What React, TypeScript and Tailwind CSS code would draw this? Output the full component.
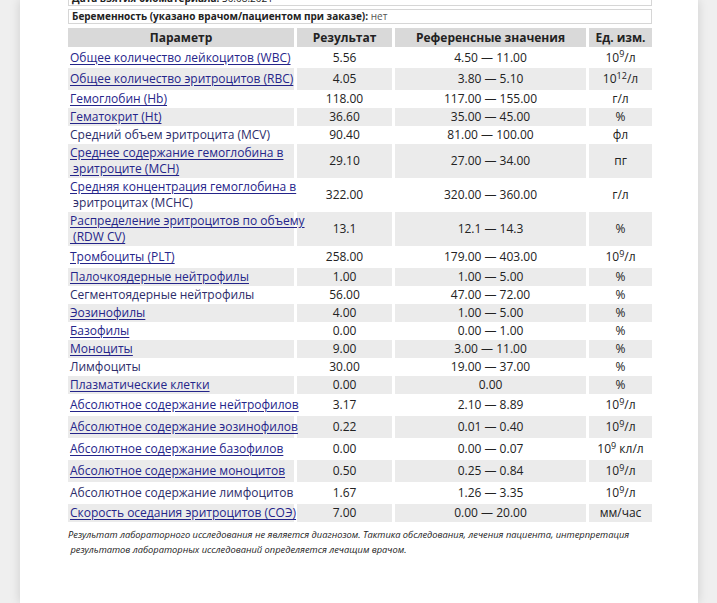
type Row = {
  name: string[];
  link?: boolean;
  plainSecond?: boolean;
  result: string;
  ref: string;
  unit: React.ReactNode;
  h: string;
};

const tenNine = (
  <>
    10<sup className="text-[9px]">9</sup>/л
  </>
);

const rows: Row[] = [
  { name: ["Общее количество лейкоцитов (WBC)"], link: true, result: "5.56", ref: "4.50 — 11.00", unit: tenNine, h: "h-[21px]" },
  { name: ["Общее количество эритроцитов (RBC)"], link: true, result: "4.05", ref: "3.80 — 5.10", unit: <>10<sup className="text-[9px]">12</sup>/л</>, h: "h-[22px]" },
  { name: ["Гемоглобин (Hb)"], link: true, result: "118.00", ref: "117.00 — 155.00", unit: "г/л", h: "h-[18px]" },
  { name: ["Гематокрит (Ht)"], link: true, result: "36.60", ref: "35.00 — 45.00", unit: "%", h: "h-[18px]" },
  { name: ["Средний объем эритроцита (MCV)"], result: "90.40", ref: "81.00 — 100.00", unit: "фл", h: "h-[18px]" },
  { name: ["Среднее содержание гемоглобина в", " эритроците (MCH)"], link: true, result: "29.10", ref: "27.00 — 34.00", unit: "пг", h: "h-[34px]" },
  { name: ["Средняя концентрация гемоглобина в", " эритроцитах (MCHC)"], link: true, plainSecond: true, result: "322.00", ref: "320.00 — 360.00", unit: "г/л", h: "h-[34px]" },
  { name: ["Распределение эритроцитов по объему", " (RDW CV)"], link: true, result: "13.1", ref: "12.1 — 14.3", unit: "%", h: "h-[34px]" },
  { name: ["Тромбоциты (PLT)"], link: true, result: "258.00", ref: "179.00 — 403.00", unit: tenNine, h: "h-[22px]" },
  { name: ["Палочкоядерные нейтрофилы"], link: true, result: "1.00", ref: "1.00 — 5.00", unit: "%", h: "h-[18px]" },
  { name: ["Сегментоядерные нейтрофилы"], result: "56.00", ref: "47.00 — 72.00", unit: "%", h: "h-[18px]" },
  { name: ["Эозинофилы"], link: true, result: "4.00", ref: "1.00 — 5.00", unit: "%", h: "h-[18px]" },
  { name: ["Базофилы"], link: true, result: "0.00", ref: "0.00 — 1.00", unit: "%", h: "h-[18px]" },
  { name: ["Моноциты"], link: true, result: "9.00", ref: "3.00 — 11.00", unit: "%", h: "h-[18px]" },
  { name: ["Лимфоциты"], result: "30.00", ref: "19.00 — 37.00", unit: "%", h: "h-[18px]" },
  { name: ["Плазматические клетки"], link: true, result: "0.00", ref: "0.00", unit: "%", h: "h-[18px]" },
  { name: ["Абсолютное содержание нейтрофилов"], link: true, result: "3.17", ref: "2.10 — 8.89", unit: tenNine, h: "h-[22px]" },
  { name: ["Абсолютное содержание эозинофилов"], link: true, result: "0.22", ref: "0.01 — 0.40", unit: tenNine, h: "h-[22px]" },
  { name: ["Абсолютное содержание базофилов"], link: true, result: "0.00", ref: "0.00 — 0.07", unit: <>10<sup className="text-[9px]">9</sup> кл/л</>, h: "h-[22px]" },
  { name: ["Абсолютное содержание моноцитов"], link: true, result: "0.50", ref: "0.25 — 0.84", unit: tenNine, h: "h-[22px]" },
  { name: ["Абсолютное содержание лимфоцитов"], result: "1.67", ref: "1.26 — 3.35", unit: tenNine, h: "h-[22px]" },
  { name: ["Скорость оседания эритроцитов (СОЭ)"], link: true, result: "7.00", ref: "0.00 — 20.00", unit: "мм/час", h: "h-[18px]" },
];

export default function App() {
  return (
    <div className="min-h-screen h-[603px] overflow-hidden bg-[#efefef] font-['Open_Sans',sans-serif] text-[#222]">
      <div className="ml-[20px] w-[678px] h-[603px] overflow-hidden bg-white shadow-[0_0_10px_rgba(0,0,0,0.14)] pl-[48px]">
        <div className="w-[584px] -mt-[9px]">
          <div className="h-[15px] border border-[#d6d6d6] px-[3px] text-[10px] font-bold leading-[13px]">
            Дата взятия биоматериала: <span className="font-normal">30.08.2021</span>
          </div>
          <div className="mt-[3px] h-[15px] border border-[#d6d6d6] px-[3px] text-[10px] font-bold leading-[13px]">
            Беременность (указано врачом/пациентом при заказе):{" "}
            <span className="font-normal text-[#555]">нет</span>
          </div>

          <table className="mt-[4px] -ml-[3px] w-[590px] table-fixed border-separate border-spacing-x-[3px] border-spacing-y-0 text-[12px] leading-[16px]">
            <colgroup>
              <col className="w-[226px]" />
              <col className="w-[95px]" />
              <col className="w-[191px]" />
              <col className="w-[63px]" />
            </colgroup>
            <thead>
              <tr className="h-[19px] font-bold">
                <th className="bg-[#d9d9d9]">Параметр</th>
                <th className="bg-[#d9d9d9]">Результат</th>
                <th className="bg-[#d9d9d9]">Референсные значения</th>
                <th className="bg-[#d9d9d9]">Ед. изм.</th>
              </tr>
            </thead>
            <tbody>
              {rows.map((r, i) => {
                const bg = i % 2 === 1 ? "bg-[#ebebeb]" : "bg-white";
                return (
                  <tr key={i} className={r.h}>
                    <td className={`${bg} px-[2px] leading-[16px] whitespace-pre`}>
                      {r.name.map((line, j) => (
                        <div
                          key={j}
                          className={
                            r.link && !(r.plainSecond && j > 0)
                              ? "text-[#25258a] underline decoration-[#25258a] underline-offset-2"
                              : "text-[#2d2d6a]"
                          }
                        >
                          {line}
                        </div>
                      ))}
                    </td>
                    <td className={`${bg} text-center`}>{r.result}</td>
                    <td className={`${bg} text-center`}>{r.ref}</td>
                    <td className={`${bg} text-center`}>{r.unit}</td>
                  </tr>
                );
              })}
            </tbody>
          </table>

          <p className="mt-[5px] text-[9.3px] italic leading-[15px] whitespace-pre text-[#222]">
            Результат лабораторного исследования не является диагнозом. Тактика обследования, лечения пациента, интерпретация
            <br />
            {" результатов лабораторных исследований определяется лечащим врачом."}
          </p>
        </div>
      </div>
    </div>
  );
}
